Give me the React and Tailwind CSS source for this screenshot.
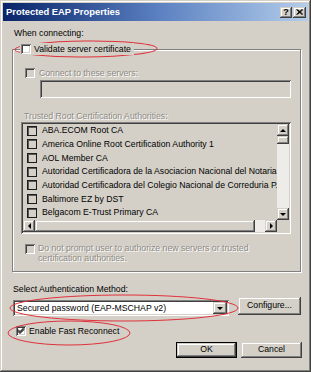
import React from "react";

const font = { fontFamily: '"Liberation Sans", Arial, sans-serif' };

const sunken =
  "shadow-[inset_1px_1px_0_#808080,inset_-1px_-1px_0_#ffffff,inset_2px_2px_0_#404040,inset_-2px_-2px_0_#d4d0c8]";
const raised =
  "shadow-[inset_-1px_-1px_0_#404040,inset_1px_1px_0_#d4d0c8,inset_-2px_-2px_0_#808080,inset_2px_2px_0_#ffffff]";

function Check() {
  return (
    <svg width="10" height="10" viewBox="0 0 10 10" className="block">
      <path d="M2 4.5 L4 6.5 L8 2.5 M2 5.5 L4 7.5 L8 3.5 M2 3.5 L4 5.5 L8 1.5" stroke="#000" strokeWidth="1" fill="none" />
    </svg>
  );
}

function Box({ checked, disabled }) {
  return (
    <div className={`w-[10px] h-[10px] shrink-0 ${disabled ? "bg-[#d4d0c8]" : "bg-white"} ${sunken}`}>
      {checked ? <Check /> : null}
    </div>
  );
}

function ListBox() {
  return (
    <div className="w-[10px] h-[10px] shrink-0 border border-[#1c1c1c] shadow-[inset_1px_1px_0_#5a5a5a] bg-[#d4d0c8]" />
  );
}

function Tri({ dir }) {
  const paths = {
    up: "M1 4 L4 1 L7 4 Z",
    down: "M1 1 L4 4 L7 1 Z",
    left: "M4 1 L1 4 L4 7 Z",
    right: "M1 1 L4 4 L1 7 Z",
  };
  const w = dir === "up" || dir === "down" ? 8 : 5;
  const h = dir === "up" || dir === "down" ? 5 : 8;
  return (
    <svg width={w} height={h} viewBox={`0 0 ${w} ${h}`} className="block">
      <path d={paths[dir]} fill="#000" />
    </svg>
  );
}

const items = [
  "ABA.ECOM Root CA",
  "America Online Root Certification Authority 1",
  "AOL Member CA",
  "Autoridad Certificadora de la Asociacion Nacional del Notaria",
  "Autoridad Certificadora del Colegio Nacional de Correduria P.",
  "Baltimore EZ by DST",
  "Belgacom E-Trust Primary CA",
];

const disabledText = "text-[#8e8b84] [text-shadow:1px_1px_0_#ffffff]";

export default function App() {
  return (
    <div
      style={font}
      className="relative w-[311px] h-[372px] overflow-hidden bg-[#d4d0c8] p-[3px] text-[8.7px] text-black shadow-[inset_-1px_-1px_0_#404040,inset_1px_1px_0_#d4d0c8,inset_-2px_-2px_0_#808080,inset_2px_2px_0_#ffffff]"
    >
      {/* title bar */}
      <div className="h-[18px] flex items-center bg-gradient-to-r from-[#0a246a] via-[#5a7fc0] to-[#b4cdea] pl-[3px] pr-[2px]">
        <span className="text-white font-bold text-[9.4px] leading-none">Protected EAP Properties</span>
        <div className="ml-auto flex items-center gap-[1px]">
          <div className={`w-[12px] h-[11px] bg-[#d4d0c8] ${raised} flex items-center justify-center font-bold text-[9px] leading-none`}>?</div>
          <div className={`w-[13px] h-[11px] bg-[#d4d0c8] ${raised} flex items-center justify-center`}>
            <svg width="7" height="6" viewBox="0 0 7 6" className="block">
              <path d="M0.5 0.5 L6 5.5 M6 0.5 L0.5 5.5 M1.5 0.5 L7 5.5 M7 0.5 L1.5 5.5" stroke="#000" strokeWidth="1" />
            </svg>
          </div>
        </div>
      </div>

      {/* content */}
      <div className="pl-[9px] pr-[7px] flex flex-col">
        <div className="mt-[6px] ml-[2px] h-[12px] leading-[12px]">When connecting:</div>

        {/* group box */}
        <div className="mt-[4px] relative flex flex-col">
          <div className="relative z-10 ml-[8px] self-start h-[12px] flex items-center gap-[3px] bg-[#d4d0c8] px-[1px]">
            <Box />
            <span className="leading-[12px] pr-[2px]">Validate server certificate</span>
          </div>
          <div className="-mt-[6px] h-[223px] border border-[#808080] shadow-[inset_1px_1px_0_#ffffff,1px_1px_0_#ffffff] pl-[8px] pr-[10px] flex flex-col">
            <div className="mt-[18px] ml-[4px] h-[10px] flex items-center gap-[4px]">
              <Box disabled />
              <span className={`${disabledText} leading-[10px]`}>Connect to these servers:</span>
            </div>
            <div className={`mt-[2px] ml-[19px] h-[18px] w-[251px] bg-[#d4d0c8] ${sunken}`} />
            <div className={`mt-[12px] ml-[3px] h-[12px] leading-[12px] ${disabledText}`}>
              Trusted Root Certification Authorities:
            </div>
            {/* list */}
            <div className={`w-[270px] h-[112px] p-[2px] bg-[#d4d0c8] ${sunken} flex flex-col`}>
              <div className="h-[96px] flex">
                <div className="flex-1 overflow-hidden flex flex-col pl-[4px]">
                  {items.map((t) => (
                    <div key={t} className="h-[13.67px] shrink-0 flex items-center gap-[5px] whitespace-nowrap">
                      <ListBox />
                      <span className="leading-none">{t}</span>
                    </div>
                  ))}
                </div>
                <div className="w-[12px] flex flex-col">
                  <div className={`h-[12px] bg-[#d4d0c8] ${raised} flex items-center justify-center`}>
                    <Tri dir="up" />
                  </div>
                  <div className={`h-[8px] bg-[#d4d0c8] ${raised}`} />
                  <div className="flex-1 bg-[#eeece8]" />
                  <div className={`h-[12px] bg-[#d4d0c8] ${raised} flex items-center justify-center`}>
                    <Tri dir="down" />
                  </div>
                </div>
              </div>
              <div className="h-[12px] flex">
                <div className={`w-[12px] bg-[#d4d0c8] ${raised} flex items-center justify-center`}>
                  <Tri dir="left" />
                </div>
                <div className={`flex-1 bg-[#d4d0c8] ${raised}`} />
                <div className="w-[10px] bg-[#eeece8]" />
                <div className={`w-[12px] bg-[#d4d0c8] ${raised} flex items-center justify-center`}>
                  <Tri dir="right" />
                </div>
                <div className="w-[12px] bg-[#d4d0c8]" />
              </div>
            </div>
            <div className="mt-[9px] ml-[4px] flex items-start gap-[3px]">
              <div className="mt-[1px]">
                <Box disabled />
              </div>
              <div className={`${disabledText} leading-[10px]`}>
                Do not prompt user to authorize new servers or trusted
                <br />
                certification authorities.
              </div>
            </div>
          </div>
        </div>

        <div className="mt-[11px] ml-[1px] h-[12px] leading-[12px]">Select Authentication Method:</div>

        <div className="mt-[2px] h-[18px] flex items-start">
          <div className={`mt-[3px] ml-[1px] w-[216px] h-[16px] bg-white ${sunken} flex items-center pl-[4px] pr-[2px]`}>
            <span className="leading-none">Secured password (EAP-MSCHAP v2)</span>
            <div className={`ml-auto w-[14px] h-[12px] bg-[#d4d0c8] ${raised} flex items-center justify-center`}>
              <Tri dir="down" />
            </div>
          </div>
          <div className={`ml-auto w-[63px] h-[18px] bg-[#d4d0c8] ${raised} flex items-center justify-center`}>
            Configure...
          </div>
        </div>

        <div className="mt-[11px] ml-[4px] h-[10px] flex items-center gap-[3px]">
          <Box checked />
          <span className="leading-none">Enable Fast Reconnect</span>
        </div>

        <div className="mt-[6px] -mr-[1px] h-[16px] flex justify-end gap-[4px]">
          <div className="w-[61px] h-[16px] border border-black">
            <div className={`w-full h-full bg-[#d4d0c8] ${raised} flex items-center justify-center`}>OK</div>
          </div>
          <div className={`w-[61px] h-[16px] bg-[#d4d0c8] ${raised} flex items-center justify-center`}>Cancel</div>
        </div>
      </div>

      {/* red highlight ellipses */}
      <svg className="absolute inset-0 pointer-events-none" width="311" height="372" viewBox="0 0 311 372">
        <ellipse cx="86" cy="49" rx="71" ry="8" fill="none" stroke="#e0303a" strokeWidth="1" transform="rotate(-0.5 86 49)" />
        <ellipse cx="124" cy="308" rx="114" ry="13" fill="none" stroke="#e0303a" strokeWidth="1" />
        <ellipse cx="69" cy="333" rx="61" ry="12" fill="none" stroke="#e0303a" strokeWidth="1" />
      </svg>
    </div>
  );
}
